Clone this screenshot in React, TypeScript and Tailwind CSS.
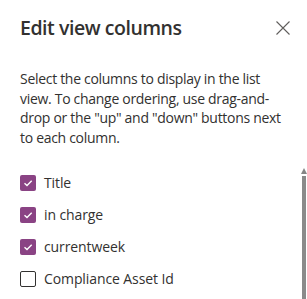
import { useState } from 'react';

const columns = [
  { name: 'Title', checked: true },
  { name: 'in charge', checked: true },
  { name: 'currentweek', checked: true },
  { name: 'Compliance Asset Id', checked: false },
];

export default function App() {
  const [items, setItems] = useState(columns);

  const toggle = (idx: number) => {
    setItems(prev => prev.map((c, i) => (i === idx ? { ...c, checked: !c.checked } : c)));
  };

  return (
    <div className="relative w-[307px] h-[299px] overflow-hidden bg-white text-[#323130] font-['Segoe_UI','Open_Sans',sans-serif]">
      {/* Header */}
      <div className="flex items-start justify-between pl-5 pr-[17px] pt-[14px]">
        <h1 className="text-[19.5px] leading-[28px] font-semibold tracking-[-0.45px]">Edit view columns</h1>
        <button className="mt-[7px] text-[#605e5c]">
          <svg width="14" height="14" viewBox="0 0 14 14" fill="none" stroke="currentColor" strokeWidth="1.1">
            <path d="M0.5 0.5 L13.5 13.5 M13.5 0.5 L0.5 13.5" />
          </svg>
        </button>
      </div>

      {/* Description */}
      <p className="mt-[27px] pl-5 pr-[18px] text-[14px] leading-[19.5px] tracking-[-0.3px]">
        Select the columns to display in the list view. To change ordering, use drag-and-drop or the "up" and "down" buttons next to each column.
      </p>

      {/* Columns */}
      <div className="mt-[26px] pl-5 flex flex-col gap-[12px]">
        {items.map((c, idx) => (
          <label key={c.name} className="flex items-center gap-[8px] h-[20px] cursor-pointer" onClick={() => toggle(idx)}>
            <span
              className={`w-4 h-4 flex items-center justify-center rounded-[2px] ${
                c.checked ? 'bg-[#8a4384]' : 'border border-[#323130] bg-white'
              }`}
            >
              {c.checked && (
                <svg width="10" height="10" viewBox="0 0 10 10" fill="none" stroke="white" strokeWidth="1.4">
                  <path d="M1.5 5.2 L4 7.5 L8.7 2.8" />
                </svg>
              )}
            </span>
            <span className="text-[14px] leading-[20px] tracking-[-0.1px]">{c.name}</span>
          </label>
        ))}
      </div>

      {/* Scrollbar */}
      <div className="absolute right-[1px] top-[168px] bottom-0 w-[5px] flex flex-col items-center">
        <div className="w-0 h-0 border-l-[3px] border-r-[3px] border-b-[6px] border-l-transparent border-r-transparent border-b-[#858585]" />
        <div className="mt-[2px] flex-1 w-[4px] bg-[#8a8a8a]" />
      </div>
    </div>
  );
}
